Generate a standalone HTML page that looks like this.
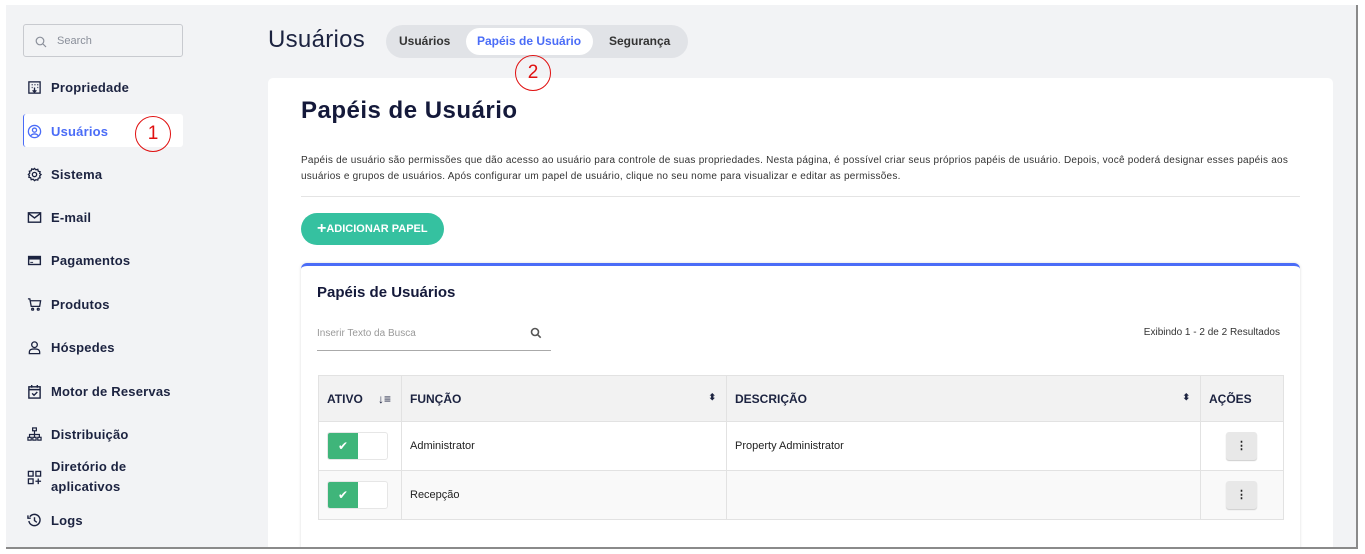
<!DOCTYPE html>
<html><head><meta charset="utf-8"><style>
*{box-sizing:border-box;margin:0;padding:0}
body{width:1365px;height:554px;background:#fff;font-family:"Liberation Sans",sans-serif;color:#1c2340;position:relative;overflow:hidden}
.frame{position:absolute;left:6px;top:5px;width:1352px;height:544px;background:#f2f3f5;border-right:2px solid #8a8a8a;border-bottom:2px solid #8a8a8a;overflow:hidden}
.abs{position:absolute}
.search{left:17px;top:19px;width:160px;height:33px;border:1px solid #c8cacf;border-radius:3px;background:#f2f3f5;font-size:11px;color:#8a8f9a;padding:10px 0 0 33px}
.nav{left:19px;font-size:13px;font-weight:bold;color:#1c2340;display:flex;align-items:center;letter-spacing:0.2px}
.nav svg{width:15px;height:15px;margin-right:9px;margin-left:2px}
.active{left:17px;top:109px;width:160px;height:33px;background:#fff;border-left:1px solid #4a6cf7;border-radius:3px}
.circ{border:1.5px solid #e01010;border-radius:50%;width:36px;height:36px;color:#e01010;font-size:19px;text-align:center;line-height:33px;background:transparent;z-index:5}
th,td{border:1px solid #e2e2e2;text-align:left;font-size:11px}
th{background:#f2f2f2;height:46px;padding-left:8px;font-size:12px;color:#1c2340}
td{height:49px;padding-left:8px;color:#222}
.tog{width:61px;height:28px;border:1px solid #e6e6e6;border-radius:3px;background:#fff;position:relative}
.tog div{position:absolute;left:0;top:0;width:30px;height:26px;background:#3fb57a;border-radius:2px 0 0 2px;color:#fff;text-align:center;line-height:26px;font-size:12px}
.dots{width:31px;height:28px;background:#e8e8e8;border-radius:3px;margin-left:17px;box-shadow:0 1px 1px #ccc;text-align:center;font-weight:bold;line-height:28px}
</style></head><body>
<div class="frame">
<div class="abs search">Search</div>
<svg class="abs" style="left:29px;top:31px" width="12" height="12" viewBox="0 0 12 12" fill="none" stroke="#8a8f9a" stroke-width="1.2"><circle cx="5" cy="5" r="3.8"/><path d="M8 8l3 3"/></svg>
<div class="abs active"></div>
<div class="abs nav" style="top:75px"><svg viewBox="0 0 16 16" fill="none" stroke="#1c2340" stroke-width="1.4"><rect x="2" y="2" width="12" height="12"/><path d="M5 5h1M8 5h1M11 5h1M5 8h1M11 8h1M8 8v5M6 11l2 2 2-2"/></svg>Propriedade</div>
<div class="abs nav" style="top:119px;color:#4a6cf7"><svg viewBox="0 0 16 16" fill="none" stroke="#4a6cf7" stroke-width="1.4"><circle cx="8" cy="8" r="6.5"/><circle cx="8" cy="6.5" r="2.2"/><path d="M4 12.5c2-2.5 6-2.5 8 0"/></svg>Usuários</div>
<div class="abs circ" style="left:129px;top:111px">1</div>
<div class="abs nav" style="top:162px"><svg viewBox="0 0 16 16" fill="none" stroke="#1c2340" stroke-width="1.4"><circle cx="8" cy="8" r="2.3"/><path d="M8 1.5l1.5 1.5 2-.5.5 2 2 .5-.5 2 1.5 1-1.5 1.5.5 2-2 .5-.5 2-2-.5L8 14.5l-1.5-1.5-2 .5-.5-2-2-.5.5-2L1.5 8 3 6.5l-.5-2 2-.5.5-2 2 .5z"/></svg>Sistema</div>
<div class="abs nav" style="top:205px"><svg viewBox="0 0 16 16" fill="none" stroke="#1c2340" stroke-width="1.5"><rect x="1.5" y="3" width="13" height="10"/><path d="M1.5 3.5l6.5 5 6.5-5"/></svg>E-mail</div>
<div class="abs nav" style="top:248px"><svg viewBox="0 0 16 16"><rect x="1" y="3" width="14" height="10" fill="#1c2340"/><rect x="2.5" y="7" width="11" height="4.5" fill="#f2f3f5"/><path d="M3.5 10h3" stroke="#1c2340"/></svg>Pagamentos</div>
<div class="abs nav" style="top:292px"><svg viewBox="0 0 16 16" fill="none" stroke="#1c2340" stroke-width="1.4"><path d="M1 2h2l1.5 8h9l1-6H4"/><circle cx="6" cy="13" r="1"/><circle cx="12" cy="13" r="1"/></svg>Produtos</div>
<div class="abs nav" style="top:335px"><svg viewBox="0 0 16 16" fill="none" stroke="#1c2340" stroke-width="1.4"><circle cx="8" cy="5" r="3"/><path d="M2.5 14.5v-2c0-2 2-3 5.5-3s5.5 1 5.5 3v2z"/></svg>Hóspedes</div>
<div class="abs nav" style="top:379px"><svg viewBox="0 0 16 16" fill="none" stroke="#1c2340" stroke-width="1.5"><rect x="2" y="3" width="12" height="12"/><path d="M5 1v3M11 1v3M2 6h12M5.5 10l2 2 3.5-3.5"/></svg>Motor de Reservas</div>
<div class="abs nav" style="top:422px"><svg viewBox="0 0 16 16" fill="none" stroke="#1c2340" stroke-width="1.3"><rect x="6" y="1" width="4" height="3"/><rect x="1" y="11" width="3.5" height="3"/><rect x="6.2" y="11" width="3.5" height="3"/><rect x="11.5" y="11" width="3.5" height="3"/><path d="M8 4v7M2.7 11V8h10.5v3"/></svg>Distribuição</div>
<div class="abs nav" style="top:452px;line-height:20px"><svg viewBox="0 0 16 16" fill="none" stroke="#1c2340" stroke-width="1.4"><rect x="1.5" y="1.5" width="5" height="5"/><rect x="9.5" y="1.5" width="5" height="5"/><rect x="1.5" y="9.5" width="5" height="5"/><path d="M12 9v6M9 12h6"/></svg><span>Diretório de<br>aplicativos</span></div>
<div class="abs nav" style="top:508px"><svg viewBox="0 0 16 16" fill="none" stroke="#1c2340" stroke-width="1.5"><path d="M3 4a6 6 0 1 1-1 4.5M1 2.5v3h3M8 4.5V8l2.5 2"/></svg>Logs</div>

<div class="abs" style="left:262px;top:21px;font-size:24px;color:#1c2340;letter-spacing:0.3px">Usuários</div>
<div class="abs" style="left:380px;top:20px;width:302px;height:33px;background:#e1e3e7;border-radius:17px"></div>
<div class="abs" style="left:460px;top:23px;width:127px;height:27px;background:#fff;border-radius:14px"></div>
<div class="abs" style="left:393px;top:29px;font-size:12px;font-weight:bold;color:#333">Usuários</div>
<div class="abs" style="left:471px;top:29px;font-size:12px;font-weight:bold;color:#4a6cf7">Papéis de Usuário</div>
<div class="abs" style="left:603px;top:29px;font-size:12px;font-weight:bold;color:#333">Segurança</div>

<div class="abs" style="left:262px;top:73px;width:1065px;height:480px;background:#fff;border-radius:5px">
 <div class="abs" style="left:33px;top:19px;font-size:24px;font-weight:bold;color:#14193a;letter-spacing:0.5px">Papéis de Usuário</div>
 <div class="abs" style="left:33px;top:75px;width:1000px;font-size:10px;line-height:16px;color:#333;letter-spacing:0.25px">Papéis de usuário são permissões que dão acesso ao usuário para controle de suas propriedades. Nesta página, é possível criar seus próprios papéis de usuário. Depois, você poderá designar esses papéis aos usuários e grupos de usuários. Após configurar um papel de usuário, clique no seu nome para visualizar e editar as permissões.</div>
 <div class="abs" style="left:33px;top:118px;width:999px;height:1px;background:#e4e4e4"></div>
 <div class="abs" style="left:33px;top:135px;width:143px;height:32px;background:#35c1a0;border-radius:16px;color:#fff;font-size:11px;font-weight:bold;line-height:32px;padding-left:16px"><span style="font-size:16px;vertical-align:-1px">+</span>ADICIONAR PAPEL</div>
 <div class="abs" style="left:33px;top:185px;width:999px;height:300px;border-top:3px solid #4a6cf7;border-radius:6px;box-shadow:0 0 3px #ddd;background:#fff">
  <div class="abs" style="left:16px;top:18px;font-size:15px;font-weight:bold;color:#14193a">Papéis de Usuários</div>
  <div class="abs" style="left:16px;top:62px;width:234px;height:23px;border-bottom:1px solid #aaa;font-size:10px;color:#999">Inserir Texto da Busca</div>
  <svg class="abs" style="left:229px;top:61px" width="12" height="12" viewBox="0 0 12 12" fill="none" stroke="#555" stroke-width="1.6"><circle cx="5" cy="5" r="3.5"/><path d="M7.7 7.7l3 3"/></svg>
  <div class="abs" style="right:20px;top:61px;font-size:10px;color:#333">Exibindo 1 - 2 de 2 Resultados</div>
  <table class="abs" style="left:17px;top:109px;width:966px;border-collapse:collapse">
   <tr><th style="width:83px">ATIVO <span style="float:right;margin-right:10px">↓≡</span></th><th style="width:325px">FUNÇÃO <span style="float:right;margin-right:10px;font-size:9px">⬍</span></th><th style="width:474px">DESCRIÇÃO <span style="float:right;margin-right:10px;font-size:9px">⬍</span></th><th>AÇÕES</th></tr>
   <tr><td><div class="tog"><div>✔</div></div></td><td>Administrator</td><td>Property Administrator</td><td><div class="dots">⋮</div></td></tr>
   <tr style="background:#f9f9f9"><td><div class="tog"><div>✔</div></div></td><td>Recepção</td><td></td><td><div class="dots">⋮</div></td></tr>
  </table>
 </div>
</div>
<div class="abs circ" style="left:509px;top:50px">2</div>
</div>
</body></html>
